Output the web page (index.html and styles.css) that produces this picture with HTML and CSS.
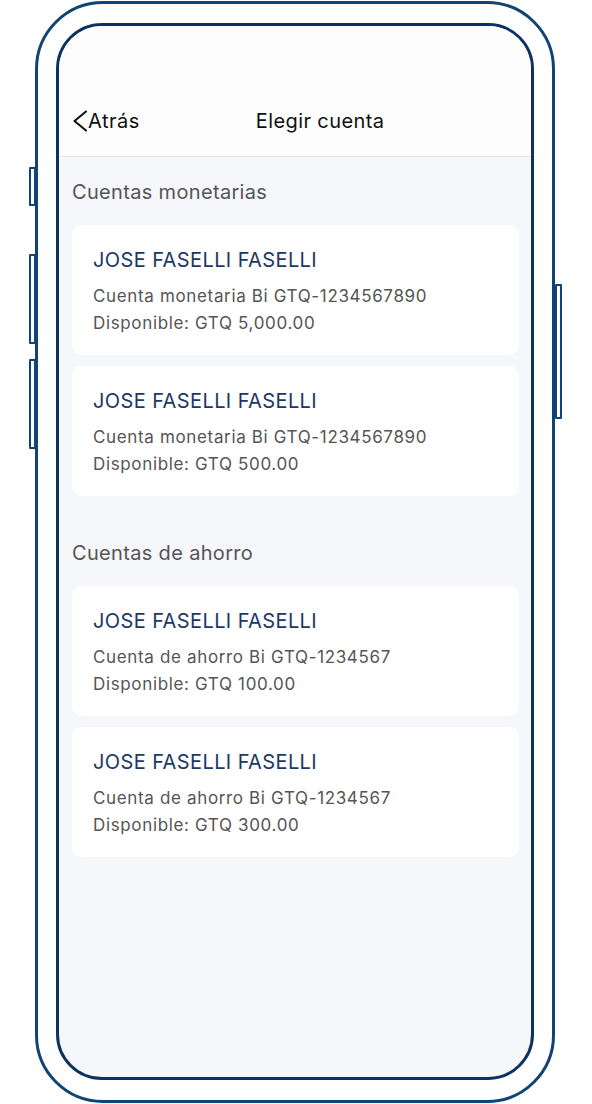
FILE: index.html
```html
<!DOCTYPE html>
<html lang="es">
<head>
<meta charset="utf-8">
<title>Elegir cuenta</title>
<link rel="stylesheet" href="styles.css">
</head>
<body>
<div class="phone">
  <span class="btn btn-l1"></span>
  <span class="btn btn-l2"></span>
  <span class="btn btn-l3"></span>
  <span class="btn btn-r1"></span>
  <div class="screen">
    <header class="header">
      <nav class="nav">
        <a class="back" href="#">
          <svg class="chev" width="16" height="22" viewBox="0 0 16 22"><polyline points="14,1.5 2.5,11 14,20.5" fill="none" stroke="#111" stroke-width="2.1" stroke-linecap="round" stroke-linejoin="round"/></svg>
          <span>Atrás</span>
        </a>
        <h1 class="title">Elegir cuenta</h1>
      </nav>
    </header>
    <main class="content">
      <section class="section">
        <h2 class="section-title">Cuentas monetarias</h2>
        <div class="card">
          <div class="name">JOSE FASELLI FASELLI</div>
          <div class="line first">Cuenta monetaria Bi GTQ-1234567890</div>
          <div class="line">Disponible: GTQ 5,000.00</div>
        </div>
        <div class="card">
          <div class="name">JOSE FASELLI FASELLI</div>
          <div class="line first">Cuenta monetaria Bi GTQ-1234567890</div>
          <div class="line">Disponible: GTQ 500.00</div>
        </div>
      </section>
      <section class="section second">
        <h2 class="section-title">Cuentas de ahorro</h2>
        <div class="card">
          <div class="name">JOSE FASELLI FASELLI</div>
          <div class="line first">Cuenta de ahorro Bi GTQ-1234567</div>
          <div class="line">Disponible: GTQ 100.00</div>
        </div>
        <div class="card">
          <div class="name">JOSE FASELLI FASELLI</div>
          <div class="line first">Cuenta de ahorro Bi GTQ-1234567</div>
          <div class="line">Disponible: GTQ 300.00</div>
        </div>
      </section>
    </main>
  </div>
</div>
</body>
</html>
```
FILE: styles.css
```css
* { box-sizing: border-box; }
html, body {
  margin: 0;
  padding: 0;
  background: #ffffff;
}
body {
  font-family: Inter, "Noto Sans", "Liberation Sans", sans-serif;
  padding-top: 1px;
}
.phone {
  position: relative;
  margin-left: 35px;
  width: 520px;
  height: 1102px;
  border: 3px solid #0f4475;
  border-radius: 68px;
  padding: 19px 0 0 18px;
  background: #ffffff;
}
.btn {
  position: absolute;
  width: 7px;
  border: 2px solid #0f4475;
  background: #ffffff;
  border-radius: 1px;
}
.btn-l1 { left: -9px; top: 163px; height: 39px; }
.btn-l2 { left: -9px; top: 250px; height: 90px; }
.btn-l3 { left: -9px; top: 355px; height: 90px; }
.btn-r1 { right: -10px; top: 280px; height: 135px; }
.screen {
  width: 478px;
  height: 1057px;
  border: 3px solid #0b3260;
  border-radius: 46px;
  overflow: hidden;
  background: #f6f7fb;
}
.header {
  height: 131px;
  background: #fdfdfd;
  border-bottom: 1px solid #e5e6e8;
  display: flex;
  align-items: flex-end;
  padding: 0 0 23px 13px;
}
.nav {
  display: flex;
  align-items: center;
  height: 24px;
}
.back {
  display: flex;
  align-items: center;
  color: #111111;
  text-decoration: none;
  font-size: 20px;
  line-height: 24px;
  letter-spacing: 0.5px;
}
.chev { display: block; margin-right: 0; }
.title {
  margin: 0 0 0 116px;
  font-size: 20px;
  line-height: 24px;
  letter-spacing: 0.4px;
  font-weight: 400;
  color: #111111;
}
.content {
  padding: 0 12px 0 13px;
}
.section { padding-top: 23px; }
.section.second { padding-top: 34px; }
.section-title {
  margin: 0 0 21px 0;
  font-size: 20px;
  line-height: 24px;
  letter-spacing: 0.33px;
  font-weight: 400;
  color: #555555;
}
.card {
  background: #ffffff;
  border-radius: 10px;
  padding: 23px 20px 18px 21px;
  margin-bottom: 11px;
}
.name {
  font-size: 20px;
  line-height: 24px;
  letter-spacing: 0.4px;
  color: #1c3866;
}
.line {
  font-size: 17px;
  line-height: 27px;
  letter-spacing: 0.65px;
  color: #555555;
}
.line.first { margin-top: 11px; }
```
